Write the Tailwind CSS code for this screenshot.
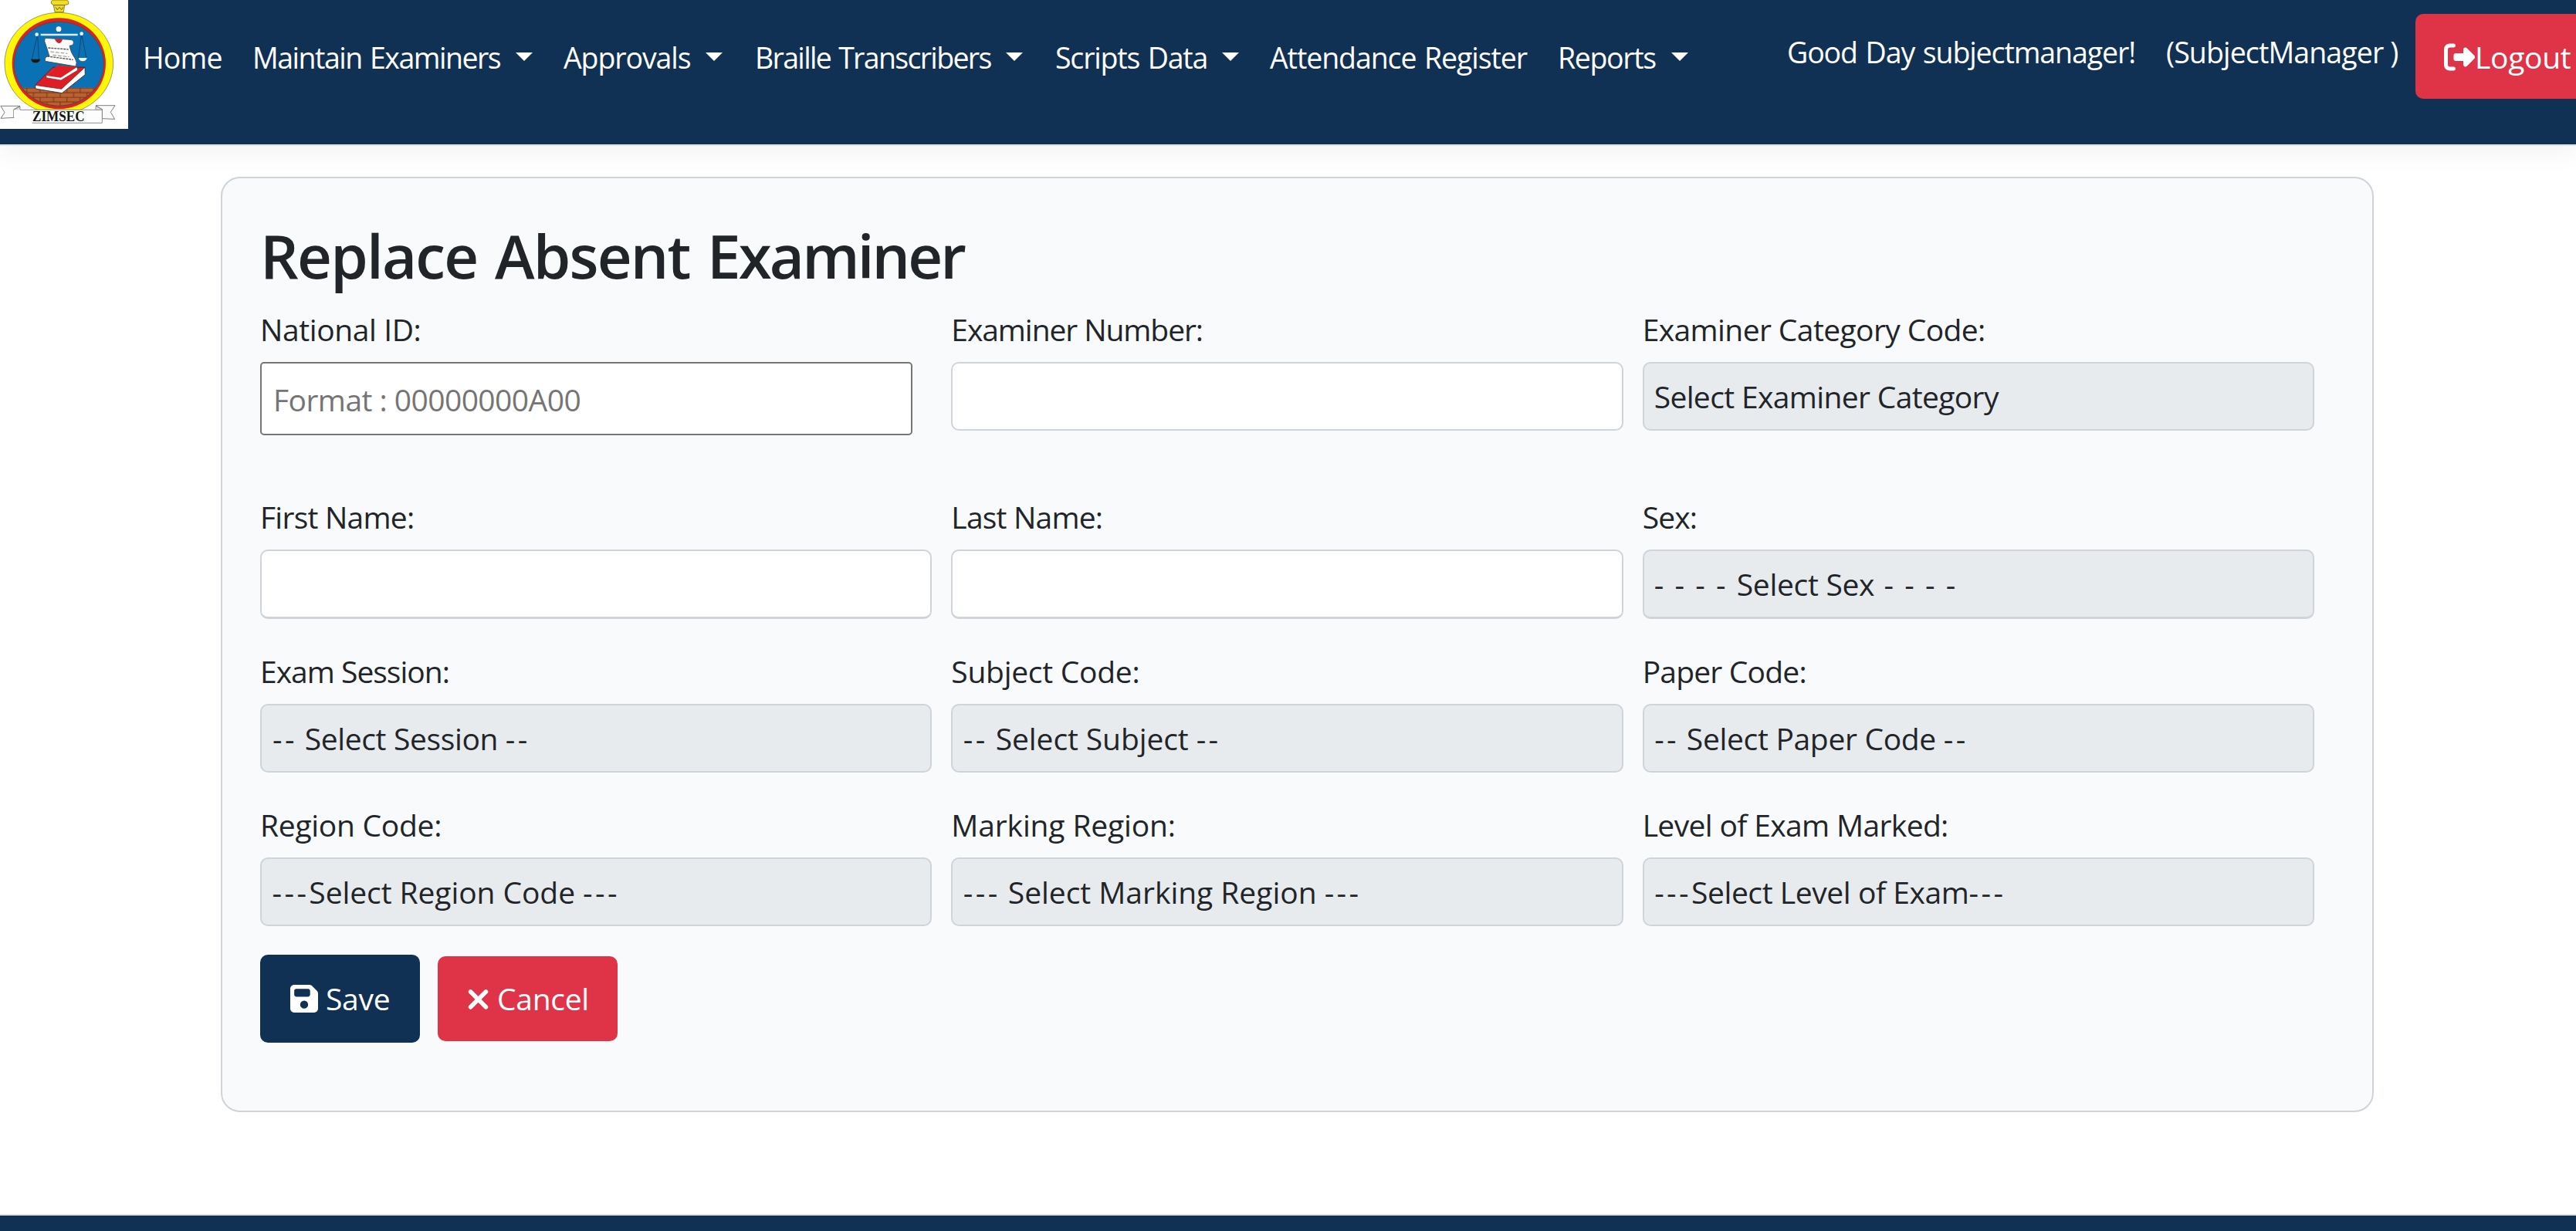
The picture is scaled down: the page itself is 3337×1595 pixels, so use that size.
<!DOCTYPE html>
<html lang="en">
<head>
<meta charset="utf-8">
<title>Replace Absent Examiner</title>
<script src="https://cdn.jsdelivr.net/npm/@tailwindcss/browser@4"></script>
</head>
<body class="flex h-[1595px] flex-col overflow-hidden bg-white font-['Open_Sans','Noto_Sans',sans-serif] text-[39px] leading-[60px] text-[#212529]">

<header class="flex h-[189px] shrink-0 items-start border-b-2 border-[#e0e1e5] bg-[#113154] text-[37.5px] whitespace-nowrap text-white shadow-[0_10px_30px_rgba(0,0,0,0.05)]">
  <a class="block h-[167px] w-[166px] shrink-0 bg-white">
    <svg class="block h-[167px] w-[166px]" viewBox="0 0 498 501">
      <defs>
        <clipPath id="disc"><ellipse cx="229" cy="248" rx="173" ry="162"/></clipPath>
        <pattern id="bricks" x="90" y="341" width="52" height="36" patternUnits="userSpaceOnUse">
          <rect width="52" height="36" fill="#bb6130"/>
          <path d="M0 1H52M0 19H52M14 1V19M40 19V36" stroke="#5e2c14" stroke-width="2.5"/>
        </pattern>
      </defs>
      <ellipse cx="229" cy="246" rx="211" ry="197" fill="#fdf50a" stroke="#6f6c3a" stroke-width="2"/>
      <path d="M199 12Q195 4 207 0H260Q270 6 266 16L251 20L247 47H213L208 20Q202 18 199 12Z" fill="#f0dc22" stroke="#7a701c" stroke-width="2.5"/>
      <path d="M208 20H251M216 28l7 10 8-10 8 10 7-10" fill="none" stroke="#6e6415" stroke-width="3"/>
      <ellipse cx="229" cy="247" rx="182" ry="177" fill="#d7261f"/>
      <ellipse cx="229" cy="248" rx="175" ry="165" fill="#7a3a3a"/>
      <g clip-path="url(#disc)">
        <rect x="50" y="80" width="360" height="262" fill="#0a72b4"/>
        <rect x="50" y="341" width="360" height="80" fill="url(#bricks)"/>
      </g>
      <path d="M146 134L124 230M146 134L151 230M317 132L305 225M317 132L336 225" stroke="#173f62" stroke-width="2.5"/>
      <path d="M158 135H302" stroke="#dcebf5" stroke-width="7"/>
      <circle cx="228" cy="113" r="10" fill="#fff"/><circle cx="143" cy="134" r="7" fill="#e9f4fa"/><circle cx="317" cy="131" r="7" fill="#e9f4fa"/>
      <path d="M120 230H157Q152 244 138 244Q124 244 120 230Z" fill="#161616"/>
      <path d="M305 225H338Q334 238 321 238Q309 238 305 225Z" fill="#fff"/>
      <path d="M175 148L270 154Q288 154 286 168Q284 178 270 178Q274 204 292 228Q302 244 294 258L176 238Q172 224 184 219H192Q184 190 173 160Z" fill="#fbfbfa" stroke="#444" stroke-width="2.5"/>
      <path d="M184 219L284 232M187 186L266 192" stroke="#555" stroke-width="4" stroke-dasharray="9 3"/>
      <path d="M196 201L262 208M205 214L268 221" stroke="#777" stroke-width="2.5" stroke-dasharray="14 6"/>
      <path d="M212 151L243 153Q238 169 228 168Q218 165 212 151Z" fill="#d81e26"/>
      <path d="M137 331L205 262H330L331 290L241 362L138 345Z" fill="#fff" stroke="#222" stroke-width="2.5"/>
      <path d="M137 331L205 262H330L239 346Z" fill="#e01d24" stroke="#5a1010" stroke-width="2"/>
      <path d="M180 294L224 254L299 261L302 273L237 312L180 302Z" fill="#fff" stroke="#444" stroke-width="2"/>
      <path d="M180 294L224 254L299 261L236 302Z" fill="#e01d24"/>
      <path d="M3 412H78L54 425V457L3 460L18 437ZM447 410H372L397 425V461L446 463L430 436Z" fill="#fafafa" stroke="#666" stroke-width="2.5"/>
      <path d="M54 457V427L78 414V427ZM397 463V425L372 412V425Z" fill="#ddd" stroke="#666" stroke-width="2"/>
      <path d="M54 427H397V478H125V472L54 457Z" fill="#fdfdfd"/>
      <path d="M78 427H397V478H125" fill="none" stroke="#777" stroke-width="2.5"/>
      <text x="126" y="470" font-family="Liberation Serif, serif" font-weight="700" font-size="54" textLength="203" lengthAdjust="spacingAndGlyphs" fill="#151515">ZIMSEC</text>
    </svg>
  </a>
  <nav class="ml-[17px] flex h-[149px] shrink-0 items-center">
    <a class="w-[142px] pl-0.5 tracking-[-0.8px]">Home</a>
    <a class="flex w-[405px] items-center justify-between pr-10 pl-0.5 tracking-[-1.5px] [word-spacing:2px]">Maintain Examiners<svg class="-mt-0.5 h-[11px] w-[22px]" viewBox="0 0 22 11"><path d="M0 0H22L11 11Z" fill="#fff"/></svg></a>
    <a class="flex w-[246px] items-center justify-between pr-10 tracking-[-1.11px]">Approvals<svg class="-mt-0.5 h-[11px] w-[22px]" viewBox="0 0 22 11"><path d="M0 0H22L11 11Z" fill="#fff"/></svg></a>
    <a class="flex w-[389px] items-center justify-between pr-10 pl-0.5 tracking-[-1.68px] [word-spacing:2px]">Braille Transcribers<svg class="-mt-0.5 h-[11px] w-[22px]" viewBox="0 0 22 11"><path d="M0 0H22L11 11Z" fill="#fff"/></svg></a>
    <a class="flex w-[280px] items-center justify-between pr-10 pl-0.5 tracking-[-1.2px] [word-spacing:2px]">Scripts Data<svg class="-mt-0.5 h-[11px] w-[22px]" viewBox="0 0 22 11"><path d="M0 0H22L11 11Z" fill="#fff"/></svg></a>
    <a class="w-[371px] tracking-[-1.09px] [word-spacing:2px]">Attendance Register</a>
    <a class="flex w-[211px] items-center justify-between pr-10 pl-0.5 tracking-[-1.35px]">Reports<svg class="-mt-0.5 h-[11px] w-[22px]" viewBox="0 0 22 11"><path d="M0 0H22L11 11Z" fill="#fff"/></svg></a>
  </nav>
  <div class="ml-[87px] flex h-[135px] shrink-0 items-center">
    <span class="w-[490px] pl-px tracking-[-1.1px] [word-spacing:2px]">Good Day subjectmanager!</span>
    <span class="w-[325px] pl-0.5 tracking-[-0.88px]">(SubjectManager )</span>
  </div>
  <button class="mt-[18px] flex h-[110px] w-[245px] shrink-0 items-center rounded-[10px] bg-[#df3447] pt-px pl-[37px] text-[39px] tracking-[-0.3px]">
    <svg class="size-10 shrink-0" viewBox="0 0 512 512" fill="#fff"><path d="M377.9 105.9L500.7 228.7c7.2 7.2 11.3 17.1 11.3 27.3s-4.1 20.1-11.3 27.3L377.9 406.1c-6.4 6.4-15 9.9-24 9.9c-18.7 0-33.9-15.2-33.9-33.9l0-62.1-128 0c-17.7 0-32-14.3-32-32l0-64c0-17.7 14.3-32 32-32l128 0 0-62.1c0-18.7 15.2-33.9 33.9-33.9c9 0 17.6 3.6 24 9.9zM160 96L96 96c-17.7 0-32 14.3-32 32l0 256c0 17.7 14.3 32 32 32l64 0c17.7 0 32 14.3 32 32s-14.3 32-32 32l-64 0c-53 0-96-43-96-96L0 128C0 75 43 32 96 32l64 0c17.7 0 32 14.3 32 32s-14.3 32-32 32z"/></svg>Logout
  </button>
</header>

<main class="flex-1">
  <form class="mt-10 ml-[286px] h-[1212px] w-[2789px] rounded-[25px] border-2 border-[#ced4da] bg-[#f8fafc] pt-[52px] pl-[49px]">
    <h1 class="mb-[18px] text-[78px] leading-[96px] font-semibold tracking-[-1.79px] [word-spacing:4px]">Replace Absent <span class="tracking-[-2.9px]">Examiner</span></h1>
    <div class="grid w-[2661px] grid-cols-3 grid-rows-[243px_200px_199px_198px] gap-x-[25px] whitespace-nowrap">
      <div>
        <label class="mb-3 block tracking-[-0.4px]">National ID:</label>
        <div class="flex h-[95px] w-[845px] items-center rounded-[5px] border-2 border-[#767676] bg-white pt-0.5 pl-[15px] tracking-[-0.56px] text-[#757575]">Format : 00000000A00</div>
      </div>
      <div>
        <label class="mb-3 block tracking-[-1.08px]">Examiner Number:</label>
        <div class="h-[89px] rounded-[10px] border-2 border-[#ced4da] bg-white"></div>
      </div>
      <div>
        <label class="mb-3 block tracking-[-0.6px]">Examiner Category Code:</label>
        <div class="flex h-[89px] items-center rounded-[10px] border-2 border-[#ced4da] bg-[#e8ebee] pt-px pl-[13px] tracking-[-0.64px]">Select Examiner Category</div>
      </div>
      <div>
        <label class="mb-3 block tracking-[-0.76px]">First Name:</label>
        <div class="h-[90px] rounded-[10px] border-2 border-b-3 border-[#ced4da] bg-white"></div>
      </div>
      <div>
        <label class="mb-3 block tracking-[-0.8px]">Last Name:</label>
        <div class="h-[90px] rounded-[10px] border-2 border-b-3 border-[#ced4da] bg-white"></div>
      </div>
      <div>
        <label class="mb-3 block tracking-[-0.9px]">Sex:</label>
        <div class="flex h-[90px] items-center rounded-[10px] border-2 border-b-3 border-[#ced4da] bg-[#e8ebee] pl-[13px] whitespace-pre"><span class="tracking-[2.05px]">- - - - </span><span class="tracking-[-0.3px]">Select Sex</span><span class="tracking-[2.05px]"> - - - -</span></div>
      </div>
      <div>
        <label class="mb-3 block tracking-[-1px]">Exam Session:</label>
        <div class="flex h-[89px] items-center rounded-[10px] border-2 border-[#ced4da] bg-[#e8ebee] pl-[14px] whitespace-pre"><span class="tracking-[3.4px]">--</span><span class="tracking-[-0.36px]"> Select Session </span><span class="tracking-[3.4px]">--</span></div>
      </div>
      <div>
        <label class="mb-3 block tracking-[-0.28px]">Subject Code:</label>
        <div class="flex h-[89px] items-center rounded-[10px] border-2 border-[#ced4da] bg-[#e8ebee] pl-[13.5px] whitespace-pre"><span class="tracking-[3.4px]">--</span><span class="tracking-[-0.1px]"> Select Subject </span><span class="tracking-[3.4px]">--</span></div>
      </div>
      <div>
        <label class="mb-3 block tracking-[-0.8px]">Paper Code:</label>
        <div class="flex h-[89px] items-center rounded-[10px] border-2 border-[#ced4da] bg-[#e8ebee] pl-[13.5px] whitespace-pre"><span class="tracking-[3.4px]">--</span><span class="tracking-[-0.32px]"> Select Paper Code </span><span class="tracking-[3.4px]">--</span></div>
      </div>
      <div>
        <label class="mb-3 block tracking-[-0.28px]">Region Code:</label>
        <div class="flex h-[89px] items-center rounded-[10px] border-2 border-[#ced4da] bg-[#e8ebee] pl-[13.5px] whitespace-pre"><span class="tracking-[3.4px]">---</span><span class="tracking-[-0.08px]">Select Region Code </span><span class="tracking-[3.4px]">---</span></div>
      </div>
      <div>
        <label class="mb-3 block tracking-[-0.15px]">Marking Region:</label>
        <div class="flex h-[89px] items-center rounded-[10px] border-2 border-[#ced4da] bg-[#e8ebee] pl-[13.5px] whitespace-pre"><span class="tracking-[3.4px]">---</span><span class="tracking-[-0.03px]"> Select Marking Region </span><span class="tracking-[3.4px]">---</span></div>
      </div>
      <div>
        <label class="mb-3 block tracking-[-0.64px]">Level of Exam Marked:</label>
        <div class="flex h-[89px] items-center rounded-[10px] border-2 border-[#ced4da] bg-[#e8ebee] pl-[13.5px] whitespace-pre"><span class="tracking-[3.4px]">---</span><span class="tracking-[-0.42px]">Select Level of Exam</span><span class="tracking-[3.4px]">---</span></div>
      </div>
    </div>
    <div class="flex items-center gap-[23px] text-white">
      <button class="flex h-[114px] w-[207px] items-center gap-[10px] rounded-[10px] bg-[#113154] pl-[39px] tracking-[-0.3px]" type="button">
        <svg class="size-9 shrink-0" viewBox="0 32 448 448" fill="#fff"><path d="M64 32C28.7 32 0 60.7 0 96V416c0 35.3 28.7 64 64 64H384c35.3 0 64-28.7 64-64V173.3c0-17-6.7-33.3-18.7-45.3L352 50.7C340 38.7 323.7 32 306.7 32H64zm0 96c0-17.7 14.3-32 32-32H288c17.7 0 32 14.3 32 32v64c0 17.7-14.3 32-32 32H96c-17.7 0-32-14.3-32-32V128zM224 288a64 64 0 1 1 0 128 64 64 0 1 1 0-128z"/></svg>Save
      </button>
      <button class="flex h-[110px] w-[233px] items-center gap-[11px] rounded-[10px] bg-[#df3447] pl-[39px] tracking-[-0.3px]" type="button">
        <svg class="size-[27px] shrink-0" viewBox="0 0 27 27" fill="none" stroke="#fff" stroke-width="5.6" stroke-linecap="round"><path d="M3.6 4L23.4 23.8M23.4 4L3.6 23.8"/></svg>Cancel
      </button>
    </div>
  </form>
</main>

<footer class="h-[22px] shrink-0 border-t-2 border-[#e0e1e3] bg-[#113154]"></footer>
</body>
</html>
